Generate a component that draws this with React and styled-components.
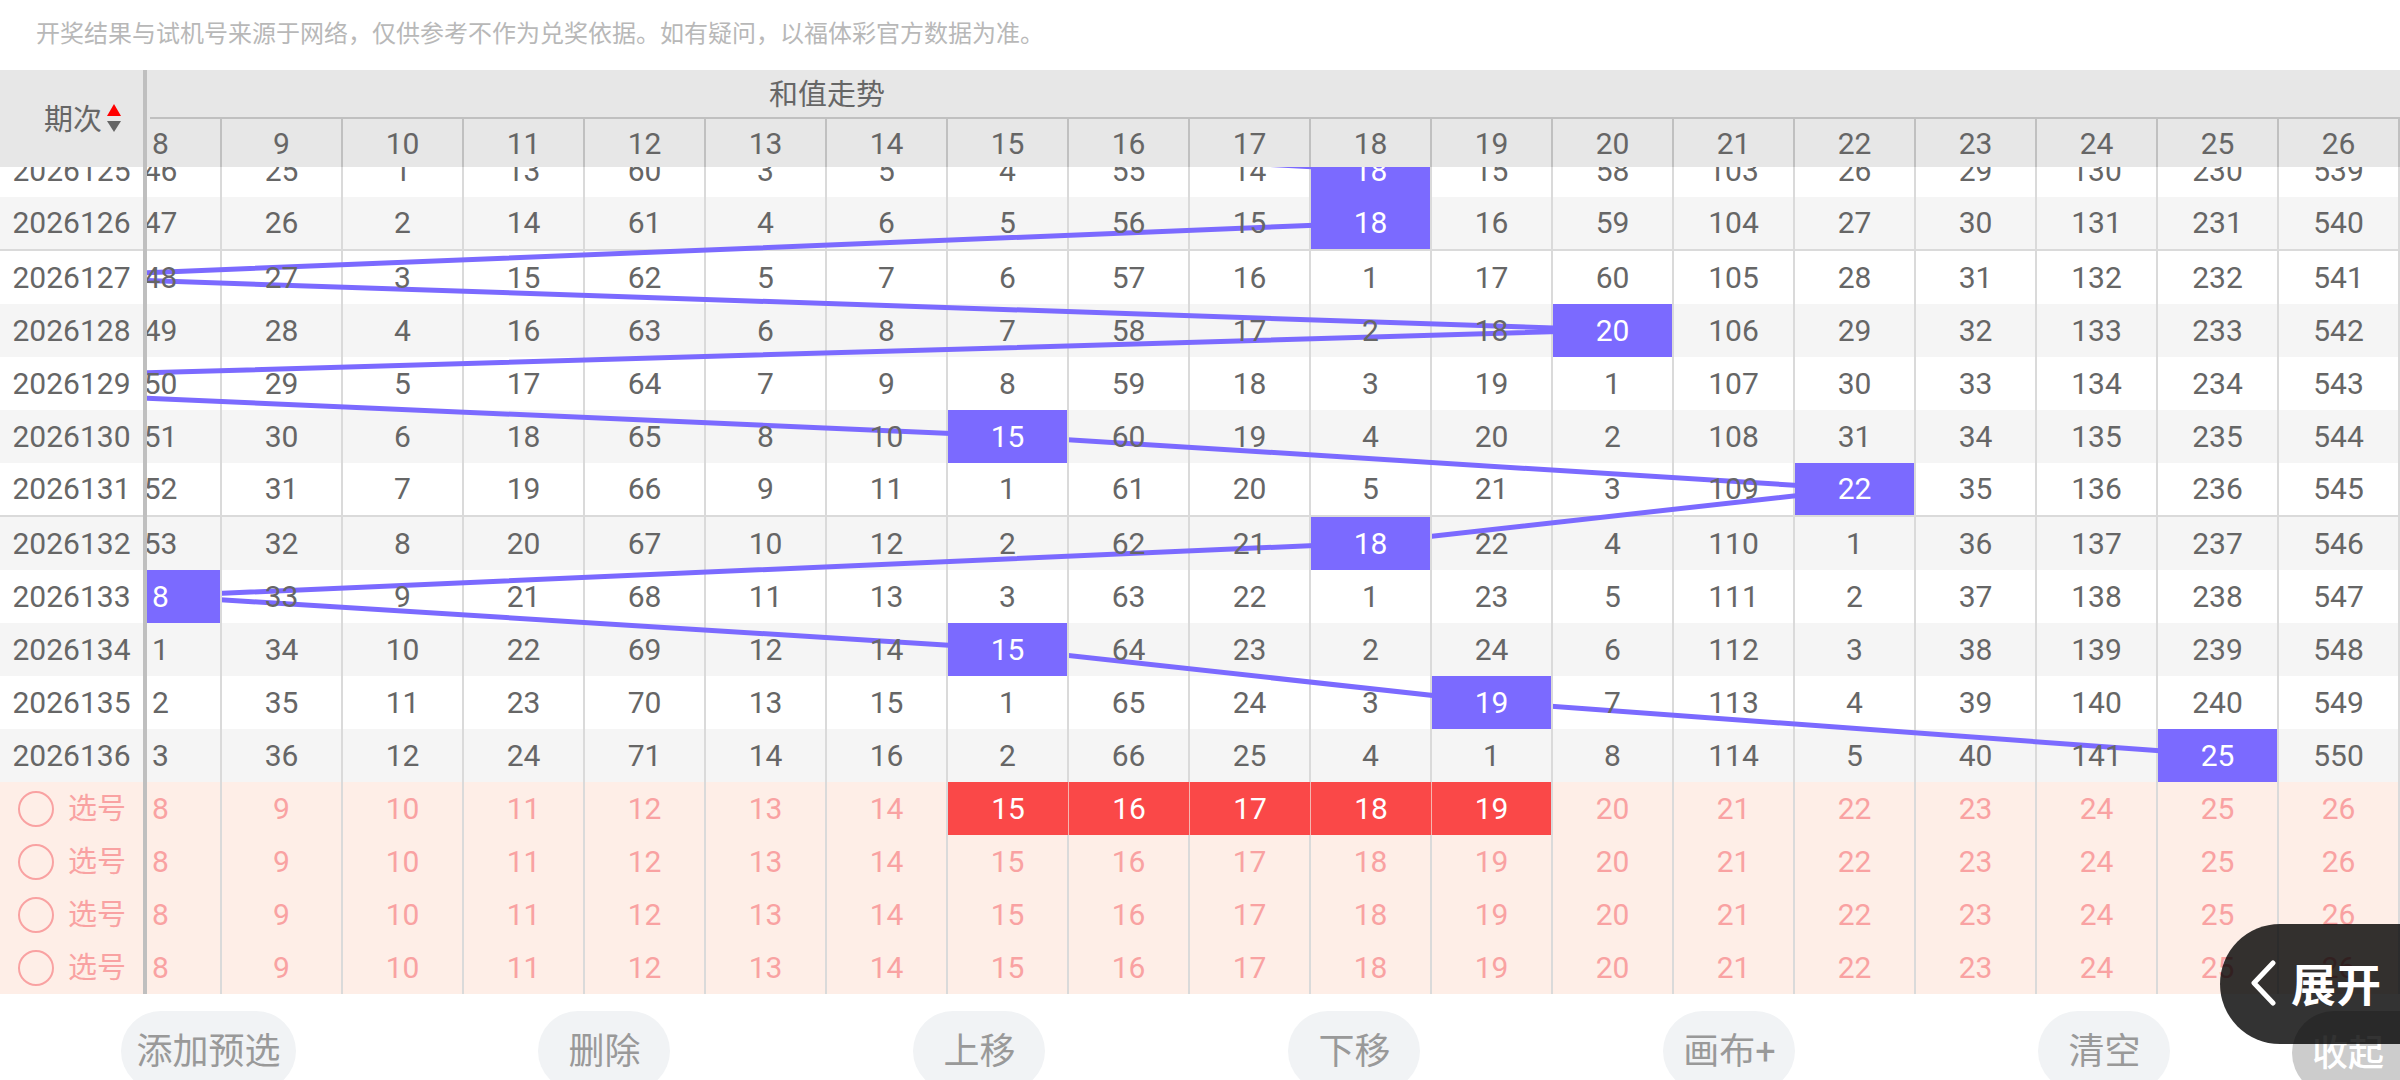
import React, { useState } from 'react';
import styled, { createGlobalStyle } from 'styled-components';

const GlobalStyle = createGlobalStyle`
  * {
    box-sizing: border-box;
  }
  body {
    margin: 0;
    background-color: #fff;
    font-family: Roboto, "Noto Sans CJK SC", sans-serif;
  }
  button {
    font-family: inherit;
    border: none;
    padding: 0;
    cursor: pointer;
  }
`;

const Page = styled.div`
  position: relative;
  height: 100vh;
  overflow: hidden;
`;

const Notice = styled.p`
  margin: 0;
  padding: 16px 36px 18px;
  font-size: 24px;
  line-height: 36px;
  color: #b8b8b8;
`;

const Chart = styled.div`
  display: flex;
`;

const PeriodColumn = styled.div`
  flex: none;
  width: 147px;
  border-right: 4px solid #bfbfbf;
`;

const TrendColumns = styled.div`
  flex: 1;
  min-width: 0;
  overflow: hidden;
`;

const HeadBand = styled.div`
  position: relative;
  z-index: 2;
  height: 97px;
  background-color: #e7e7e7;
`;

// keeps the header rule from touching the frozen column
const TrendHead = styled(HeadBand)`
  &::before {
    content: '';
    position: absolute;
    z-index: 1;
    top: 0;
    bottom: 0;
    left: 0;
    width: 3px;
    background-color: #e7e7e7;
  }
`;

const BodyClip = styled.div`
  position: relative;
  margin-top: -23px;
`;

const Table = styled.table`
  width: 100%;
  table-layout: fixed;
  border-spacing: 0;
  font-size: 30px;
  line-height: 30px;
  text-align: center;
`;

// the first visible column is partly scrolled away
const Scrolled = styled.div`
  position: relative;
  width: calc(100% + 46px);
  margin-left: -46px;
`;

const TitleCell = styled.th`
  height: 49px;
  padding: 2px 0 0;
  border-bottom: 2px solid #c0c0c0;
  font-size: 29px;
  font-weight: 400;
  color: #666;
`;

const HeadCell = styled.th`
  height: 48px;
  padding: 2px 0 0;
  border-right: 2px solid #c0c0c0;
  font-weight: 400;
  color: #666;
`;

const SortButton = styled.button`
  display: flex;
  align-items: center;
  gap: 5px;
  height: 97px;
  padding: 0 0 3px 44px;
  background: none;
  font-size: 29px;
  color: #666;

  svg {
    position: relative;
    top: 1px;
  }
`;

const Row = styled.tr`
  background-color: ${(props) => (props.$shaded ? '#f5f5f5' : '#fff')};

  > * {
    height: ${(props) => (props.$groupEnd ? '54px' : '53px')};
    ${(props) => props.$groupEnd && 'border-bottom: 2px solid #dadada;'}
  }
`;

const PeriodCell = styled.th`
  padding: 0;
  font-weight: 400;
  color: #666;
`;

const Cell = styled.td`
  padding: 0;
  border-right: 2px solid #dadada;
  color: #666;
`;

const HitCell = styled(Cell)`
  position: relative;
  z-index: 1;
  background-color: #7b6aff;
  background-clip: padding-box;
  color: #fff;
`;

const Count = styled.span`
  position: relative;
  z-index: 1;
`;

const PickRow = styled.tr`
  background-color: #feeee7;
`;

const PickCell = styled.td`
  height: 53px;
  padding: 0;
  border-right: ${(props) => (props.$joined ? '1px solid #f5b5b0' : '2px solid #dadada')};
`;

const PickButton = styled.button`
  display: block;
  width: 100%;
  height: 53px;
  background-color: ${(props) => (props.$picked ? '#fa4848' : 'transparent')};
  font-size: 30px;
  color: ${(props) => (props.$picked ? '#fff' : '#f9a2a2')};
`;

const PickHead = styled.th`
  height: 53px;
  padding: 0 0 0 18px;
  font-weight: 400;
`;

const PickLabel = styled.label`
  display: flex;
  align-items: center;
  gap: 14px;
  font-size: 29px;
  color: #f9a2a2;
`;

const PickRadio = styled.input`
  appearance: none;
  width: 36px;
  height: 36px;
  margin: 0;
  border: 2px solid #f9a2a2;
  border-radius: 50%;

  &:checked {
    background-color: #f9a2a2;
  }
`;

const Lines = styled.svg`
  position: absolute;
  top: 0;
  left: 0;
  width: 100%;
  height: ${(props) => props.$height}px;
  overflow: visible;
  pointer-events: none;
`;

const Toolbar = styled.div`
  display: flex;
  padding-top: 17px;
`;

const Actions = styled.div`
  flex: 1;
  display: flex;
  justify-content: space-around;
`;

const ActionButton = styled.button`
  min-width: 132px;
  height: 80px;
  padding: 0 15px 6px;
  border-radius: 40px;
  background-color: #f1f3f5;
  font-size: 36px;
  color: #999;
`;

const CollapseButton = styled.button`
  width: 108px;
  height: 84px;
  padding: 0 0 6px 20px;
  border-radius: 42px 0 0 42px;
  background-color: #ccc;
  font-size: 36px;
  font-weight: 500;
  text-align: left;
  white-space: nowrap;
  color: #fff;
`;

const ExpandButton = styled.button`
  position: absolute;
  z-index: 3;
  right: 0;
  bottom: 36px;
  display: flex;
  align-items: center;
  gap: 15px;
  height: 120px;
  padding: 0 19px 3px 30px;
  border-radius: 60px 0 0 60px;
  background-color: rgba(0, 0, 0, 0.8);
  font-size: 45px;
  font-weight: 700;
  color: #fff;
`;

const FIRST_SUM = 8;
const FIRST_PERIOD = 2026125;

// winning sum of each period, oldest first
const sums = [18, 18, 7, 20, 5, 15, 22, 18, 8, 15, 19, 25];
const previousSum = 10;

// misses counted up to the first period, for sums 8 to 26
const startMisses = [46, 25, 1, 13, 60, 3, 5, 4, 55, 14, 0, 15, 58, 103, 26, 29, 130, 230, 539];
const columns = startMisses.map((_, i) => FIRST_SUM + i);

const isGroupEnd = (period) => period % 5 === 1 && period !== 2026136;

function buildRows() {
  let misses = startMisses;
  return sums.map((sum, i) => {
    if (i > 0) {
      misses = misses.map((count, c) => (columns[c] === sum ? 0 : count + 1));
    }
    const period = FIRST_PERIOD + i;
    return { period, misses, shaded: i % 2 === 1, groupEnd: isGroupEnd(period) };
  });
}

const rows = buildRows();

function TrendLines() {
  let top = 0;
  const points = [[previousSum - FIRST_SUM + 0.5, -27]];
  rows.forEach((row, i) => {
    points.push([sums[i] - FIRST_SUM + 0.5, top + 26]);
    top += row.groupEnd ? 54 : 53;
  });

  return (
    <Lines $height={top} viewBox={`0 0 ${columns.length} ${top}`} preserveAspectRatio="none" aria-hidden="true">
      <polyline
        points={points.map((p) => p.join(',')).join(' ')}
        fill="none"
        stroke="#7b6aff"
        strokeWidth="5"
        vectorEffect="non-scaling-stroke"
      />
    </Lines>
  );
}

const pickRows = [0, 1, 2, 3];
const actions = ['添加预选', '删除', '上移', '下移', '画布+', '清空'];

function App() {
  const [activeRow, setActiveRow] = useState(null);
  const [picks, setPicks] = useState([[15, 16, 17, 18, 19], [], [], []]);

  const togglePick = (row, sum) => {
    setPicks(picks.map((list, i) => {
      if (i !== row) return list;
      return list.includes(sum) ? list.filter((n) => n !== sum) : [...list, sum];
    }));
  };

  return (
    <Page>
      <GlobalStyle />
      <Notice>开奖结果与试机号来源于网络，仅供参考不作为兑奖依据。如有疑问，以福体彩官方数据为准。</Notice>

      <Chart>
        <PeriodColumn>
          <HeadBand>
            <SortButton>
              期次
              <svg width="14" height="28" viewBox="0 0 14 28" aria-hidden="true">
                <path d="M7 0L14 12H0Z" fill="#f00" />
                <path d="M0 17H14L7 28Z" fill="#666" />
              </svg>
            </SortButton>
          </HeadBand>
          <BodyClip>
            <Table>
              <tbody>
                {rows.map((row) => (
                  <Row key={row.period} $shaded={row.shaded} $groupEnd={row.groupEnd}>
                    <PeriodCell scope="row">{row.period}</PeriodCell>
                  </Row>
                ))}
                {pickRows.map((r) => (
                  <PickRow key={r}>
                    <PickHead scope="row">
                      <PickLabel>
                        <PickRadio
                          type="radio"
                          name="pick-row"
                          checked={activeRow === r}
                          onChange={() => setActiveRow(r)}
                        />
                        选号
                      </PickLabel>
                    </PickHead>
                  </PickRow>
                ))}
              </tbody>
            </Table>
          </BodyClip>
        </PeriodColumn>

        <TrendColumns>
          <TrendHead>
            <Scrolled>
              <Table>
                <colgroup>
                  {columns.map((sum) => <col key={sum} />)}
                </colgroup>
                <thead>
                  <tr>
                    <TitleCell colSpan={12}>和值走势</TitleCell>
                    <TitleCell as="td" colSpan={7} />
                  </tr>
                  <tr>
                    {columns.map((sum) => <HeadCell key={sum} scope="col">{sum}</HeadCell>)}
                  </tr>
                </thead>
              </Table>
            </Scrolled>
          </TrendHead>
          <BodyClip>
            <Scrolled>
              <Table>
                <tbody>
                  {rows.map((row) => (
                    <Row key={row.period} $shaded={row.shaded} $groupEnd={row.groupEnd}>
                      {row.misses.map((count, c) => (
                        count === 0
                          ? <HitCell key={columns[c]}>{columns[c]}</HitCell>
                          : <Cell key={columns[c]}><Count>{count}</Count></Cell>
                      ))}
                    </Row>
                  ))}
                  {pickRows.map((r) => (
                    <PickRow key={r}>
                      {columns.map((sum) => (
                        <PickCell key={sum} $joined={picks[r].includes(sum) && picks[r].includes(sum + 1)}>
                          <PickButton $picked={picks[r].includes(sum)} onClick={() => togglePick(r, sum)}>
                            {sum}
                          </PickButton>
                        </PickCell>
                      ))}
                    </PickRow>
                  ))}
                </tbody>
              </Table>
              <TrendLines />
            </Scrolled>
          </BodyClip>
        </TrendColumns>
      </Chart>

      <Toolbar>
        <Actions>
          {actions.map((name) => <ActionButton key={name}>{name}</ActionButton>)}
        </Actions>
        <CollapseButton>收起</CollapseButton>
      </Toolbar>

      <ExpandButton>
        <svg width="26" height="46" viewBox="0 0 26 46" fill="none" aria-hidden="true">
          <path d="M23 3L4 23L23 43" stroke="#fff" strokeWidth="5" strokeLinecap="round" strokeLinejoin="round" />
        </svg>
        展开
      </ExpandButton>
    </Page>
  );
}

export default App;
